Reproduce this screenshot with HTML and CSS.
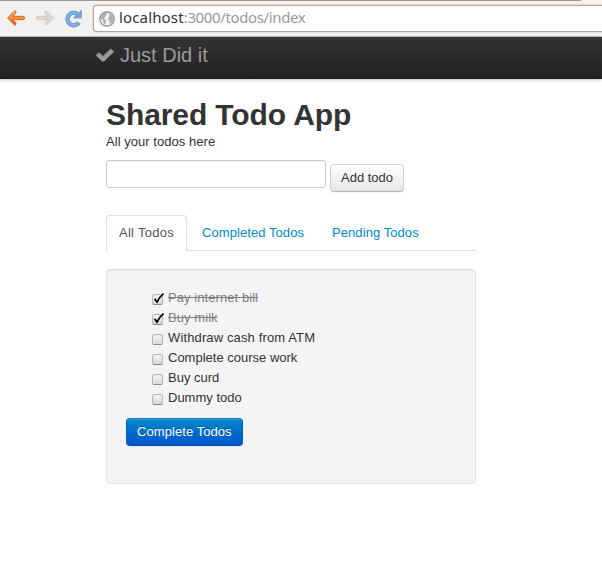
FILE: index.html
```html
<!DOCTYPE html>
<html lang="en">
<head>
<meta charset="utf-8">
<title>Just Did it</title>
<link rel="stylesheet" href="styles.css">
</head>
<body>
<div class="toolbar">
  <svg class="nav-icons" width="93" height="36" viewBox="0 0 93 36">
    <defs>
      <linearGradient id="orange" x1="0" y1="0" x2="0" y2="1"><stop offset="0" stop-color="#f5b765"/><stop offset=".55" stop-color="#ed8b3c"/><stop offset="1" stop-color="#db5420"/></linearGradient>
    </defs>
    <path d="M7.500 18 14 11.300q1.300-1 2 .1.500.9-.2 1.800L12.800 16.300H23q1.600.2 1.600 1.700T23 19.700H12.800l3 3.100q.7.9.2 1.700-.8 1.200-2 .1Z" fill="url(#orange)" stroke="#d9692d" stroke-width="1" stroke-linejoin="round"/>
    <path d="M53.500 18 47 11.300q-1.300-1-2 .1-.5.9.2 1.800l3 3.100H38q-1.600.2-1.600 1.700T38 19.700h10.200l-3 3.100q-.7.9-.2 1.700.8 1.200 2 .1Z" fill="#dedad7" stroke="#cfcac7" stroke-width="1" stroke-linejoin="round"/>
    <path d="M77.200 13.900A6.200 6.200 0 1 0 78.900 22.600" fill="none" stroke="#588fc9" stroke-width="4.400"/>
    <path d="M77.200 13.900A6.200 6.200 0 1 0 78.900 22.600" fill="none" stroke="#83b2e2" stroke-width="2.600"/>
    <path d="M81.200 10.500v7.300h-7.500Z" fill="#79abdf" stroke="#588fc9" stroke-linejoin="round"/>
  </svg>
  <div class="address">
    <svg width="16" height="16" viewBox="0 0 16 16">
      <circle cx="8" cy="8" r="7.200" fill="#f2f2f2" stroke="#858585" stroke-width="1.200"/>
      <path d="M2.300 4.500 5.200 2l3 .3-.5 1.500L6 5l.5 1.500L4.700 7l1.200 1.700 1.500.8-.8 1.800-.8 2.500L4.400 12l-.3-2.500L2 7.500ZM10 2.500l2.500 1.300 1.700 3-.4 3.500-1.500 2.400-1.500-.5-.2-2.400-1.500-1 .3-2.300 1.400-1-.9-1.500Z" fill="#b0b0b0"/>
    </svg>
    <span class="url"><b>localhost</b>:3000/todos/index</span>
  </div>
</div>
<header class="navbar">
  <svg width="20" height="16" viewBox="0 0 20 16"><path d="M1.200 7.400 3.800 4.800l4.200 3.700L15.800 1l2.800 2.800L9 13H7.200Z" fill="#999" stroke="#999" stroke-width="1" stroke-linejoin="round"/></svg>
  <span class="brand">Just Did it</span>
</header>
<main class="content">
  <h1>Shared Todo App</h1>
  <p class="lead">All your todos here</p>
  <form class="add-form">
    <input class="field" type="text" aria-label="Todo">
    <button class="btn" type="button">Add todo</button>
  </form>
  <nav class="tabs">
    <a class="tab active">All Todos</a>
    <a class="tab">Completed Todos</a>
    <a class="tab">Pending Todos</a>
  </nav>
  <section class="well">
    <ul class="todos">
      <li class="done"><span class="box"><svg width="12" height="12" viewBox="0 0 12 12"><path d="M2.600 4.700 5 8.100Q7.500 3 11.500-.3" /></svg></span><span>Pay internet bill</span></li>
      <li class="done"><span class="box"><svg width="12" height="12" viewBox="0 0 12 12"><path d="M2.600 4.700 5 8.100Q7.500 3 11.500-.3" /></svg></span><span>Buy milk</span></li>
      <li class="wide"><span class="box"></span><span>Withdraw cash from ATM</span></li>
      <li><span class="box"></span><span>Complete course work</span></li>
      <li><span class="box"></span><span>Buy curd</span></li>
      <li><span class="box"></span><span>Dummy todo</span></li>
    </ul>
    <button class="btn primary" type="button">Complete Todos</button>
  </section>
</main>
</body>
</html>
```
FILE: styles.css
```css
* { box-sizing: border-box; }
body {
  margin: 0;
  height: 572px;
  overflow: hidden;
  background: #fff;
  color: #333;
  font: 13px/20px "Liberation Sans", Arial, sans-serif;
}
.toolbar {
  display: flex;
  height: 37px;
  background: linear-gradient(#9d9b9a, #9d9b9a) 0 0 / 581px 1px no-repeat, #f2f1f0;
  border-bottom: 1px solid #c5c1be;
}
.nav-icons { flex: none; }
.address {
  display: flex;
  align-items: center;
  flex: 1;
  height: 27px;
  margin-top: 5px;
  padding-left: 5px;
  border: 1px solid #b5a69d;
  border-right: 0;
  border-radius: 4px 0 0 4px;
  background: #fff;
  box-shadow: 0 0 0 1px #e5e0dd;
}
.url {
  margin: 0 0 2px 4px;
  color: #999;
  font: 15px/23px "Noto Sans", sans-serif;
  letter-spacing: -.37px;
  white-space: nowrap;
}
.url b { color: #333; font-weight: 400; letter-spacing: .15px; }
.address svg { flex: none; }
.navbar {
  display: flex;
  height: 42px;
  padding: 8px 0 0 95px;
  background: linear-gradient(#333, #222);
  box-shadow: 0 1px 3px rgba(0, 0, 0, .25), inset 0 -1px 0 rgba(0, 0, 0, .1);
}
.navbar svg { margin-top: 3px; }
.brand { margin-left: 5px; color: #999; font-size: 20px; line-height: 20px; }
.content { width: 370px; margin: 18px 0 0 106px; }
h1 { margin: 0; font-size: 30px; line-height: 36px; letter-spacing: -.1px; }
.lead { margin: -1px 0 8px; letter-spacing: .04px; }
.add-form { display: flex; margin: 0; height: 55px; }
.field {
  width: 220px;
  height: 28px;
  margin: 0 4px 0 0;
  border: 1px solid #ccc;
  border-radius: 3px;
  box-shadow: inset 0 1px 1px rgba(0, 0, 0, .075);
}
.btn {
  height: 28px;
  margin: 4px 0 0;
  padding: 0 10px;
  border: 1px solid #ccc;
  border-color: #d9d9d9 #d0d0d0 #b3b3b3;
  border-radius: 4px;
  background: linear-gradient(#fff, #e6e6e6);
  box-shadow: inset 0 1px 0 rgba(255, 255, 255, .2), 0 1px 2px rgba(0, 0, 0, .05);
  color: #333;
  font: inherit;
  line-height: 18px;
  white-space: nowrap;
  text-shadow: 0 1px 1px rgba(255, 255, 255, .75);
}
.tabs { display: flex; height: 36px; border-bottom: 1px solid #ddd; }
.tab {
  height: 36px;
  margin-right: 2px;
  padding: 8px 12px;
  border: 1px solid transparent;
  border-bottom: 0;
  border-radius: 4px 4px 0 0;
  color: #08c;
  line-height: 18px;
  letter-spacing: .07px;
}
.tab.active { border-color: #ddd; background: #fff; color: #555; letter-spacing: .28px; }
.well {
  height: 215px;
  margin-top: 18px;
  padding: 18px 19px;
  border: 1px solid #e5e5e5;
  border-radius: 4px;
  background: #f4f4f4;
  box-shadow: inset 0 1px 1px rgba(0, 0, 0, .05);
}
.todos { margin: 0 0 10px; padding: 0 0 0 26px; list-style: none; }
.todos li { display: flex; height: 20px; }
.todos .wide { letter-spacing: .13px; }
.todos .done { color: #808080; text-decoration: line-through; letter-spacing: .07px; }
.box {
  flex: none;
  width: 11px;
  height: 11px;
  margin: 6px 5px 0 0;
  border: 1px solid #b5b5b5;
  border-bottom-color: #888;
  border-radius: 2.5px;
  background: linear-gradient(#f2f2f2, #d8d8d8);
}
.box svg { display: block; margin: -1px; overflow: visible; }
.box path { fill: none; stroke: #000; stroke-width: 1.7; }
.btn.primary {
  display: block;
  margin: 0;
  border-color: #0074bd #0063b8 #004db3;
  background: linear-gradient(#08c, #05c);
  color: #fff;
  letter-spacing: .07px;
  text-shadow: 0 -1px 0 rgba(0, 0, 0, .25);
}
```
